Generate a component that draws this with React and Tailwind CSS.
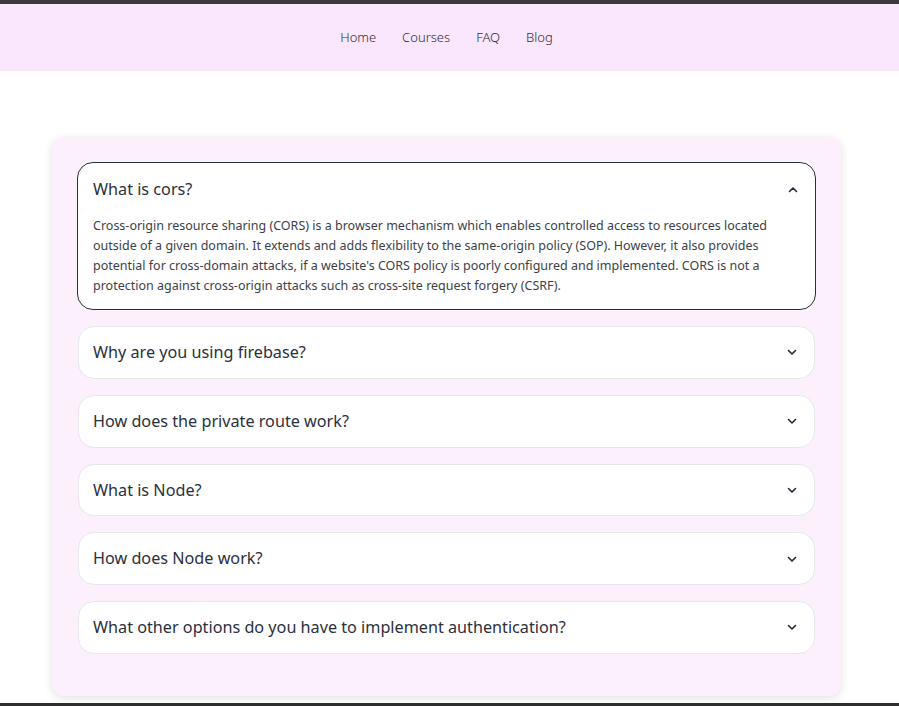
import { useState } from "react";

const faqs = [
  {
    q: "What is cors?",
    a: "Cross-origin resource sharing (CORS) is a browser mechanism which enables controlled access to resources located outside of a given domain. It extends and adds flexibility to the same-origin policy (SOP). However, it also provides potential for cross-domain attacks, if a website's CORS policy is poorly configured and implemented. CORS is not a protection against cross-origin attacks such as cross-site request forgery (CSRF).",
  },
  { q: "Why are you using firebase?", a: "" },
  { q: "How does the private route work?", a: "" },
  { q: "What is Node?", a: "" },
  { q: "How does Node work?", a: "" },
  { q: "What other options do you have to implement authentication?", a: "" },
];

const Chevron = ({ up }) => (
  <svg
    width="12"
    height="12"
    viewBox="0 0 12 12"
    fill="none"
    stroke="#1f2937"
    strokeWidth="1.6"
    strokeLinecap="round"
    strokeLinejoin="round"
    className={up ? "rotate-180" : ""}
  >
    <path d="M2.5 4.5 6 8l3.5-3.5" />
  </svg>
);

const FaqItem = ({ q, a, open, onToggle }) => (
  <div
    className={`mb-[16px] rounded-2xl bg-white last:mb-0 ${
      open ? "mx-0 border border-[#2a303c]" : "mx-px border border-[#e5e7eb]"
    }`}
  >
    <button
      onClick={onToggle}
      className={`flex w-full items-center justify-between pr-[16px] text-left text-[16.2px] text-[#2a303c] ${
        open ? "h-[51px] pt-[2px] pl-[15px]" : "h-[50.75px] pl-[14px]"
      }`}
    >
      <span>{q}</span>
      <Chevron up={open} />
    </button>
    {open && (
      <p className="pt-[2px] pb-[13px] pl-[15px] pr-[30px] text-[12.5px] leading-[20px] text-[#3c3f4a]">
        {a}
      </p>
    )}
  </div>
);

export default function App() {
  const [openIdx, setOpenIdx] = useState(0);

  return (
    <div className="min-h-screen bg-white font-['Noto_Sans',sans-serif]">
      <div className="h-[4px] bg-[#3b3b3b]" />
      <nav className="flex h-[67px] items-center justify-center gap-[26px] bg-[#fae6fd] pr-[6px] text-[13px] font-light text-[#2f2f3a]">
        <a href="#">Home</a>
        <a href="#">Courses</a>
        <a href="#">FAQ</a>
        <a href="#">Blog</a>
      </nav>

      <div className="flex justify-center pt-[66px] pr-[6px] pb-[40px]">
        <div className="w-[789px] rounded-xl bg-[#fdf0fd] px-[25px] pt-[25px] pb-[42px] shadow-[0_2px_8px_rgba(0,0,0,0.12)]">
          {faqs.map((f, i) => (
            <FaqItem
              key={f.q}
              q={f.q}
              a={f.a}
              open={openIdx === i}
              onToggle={() => setOpenIdx(openIdx === i ? -1 : i)}
            />
          ))}
        </div>
      </div>

      <div className="fixed inset-x-0 bottom-0 h-[3px] bg-[#2e2e2e]" />
    </div>
  );
}
